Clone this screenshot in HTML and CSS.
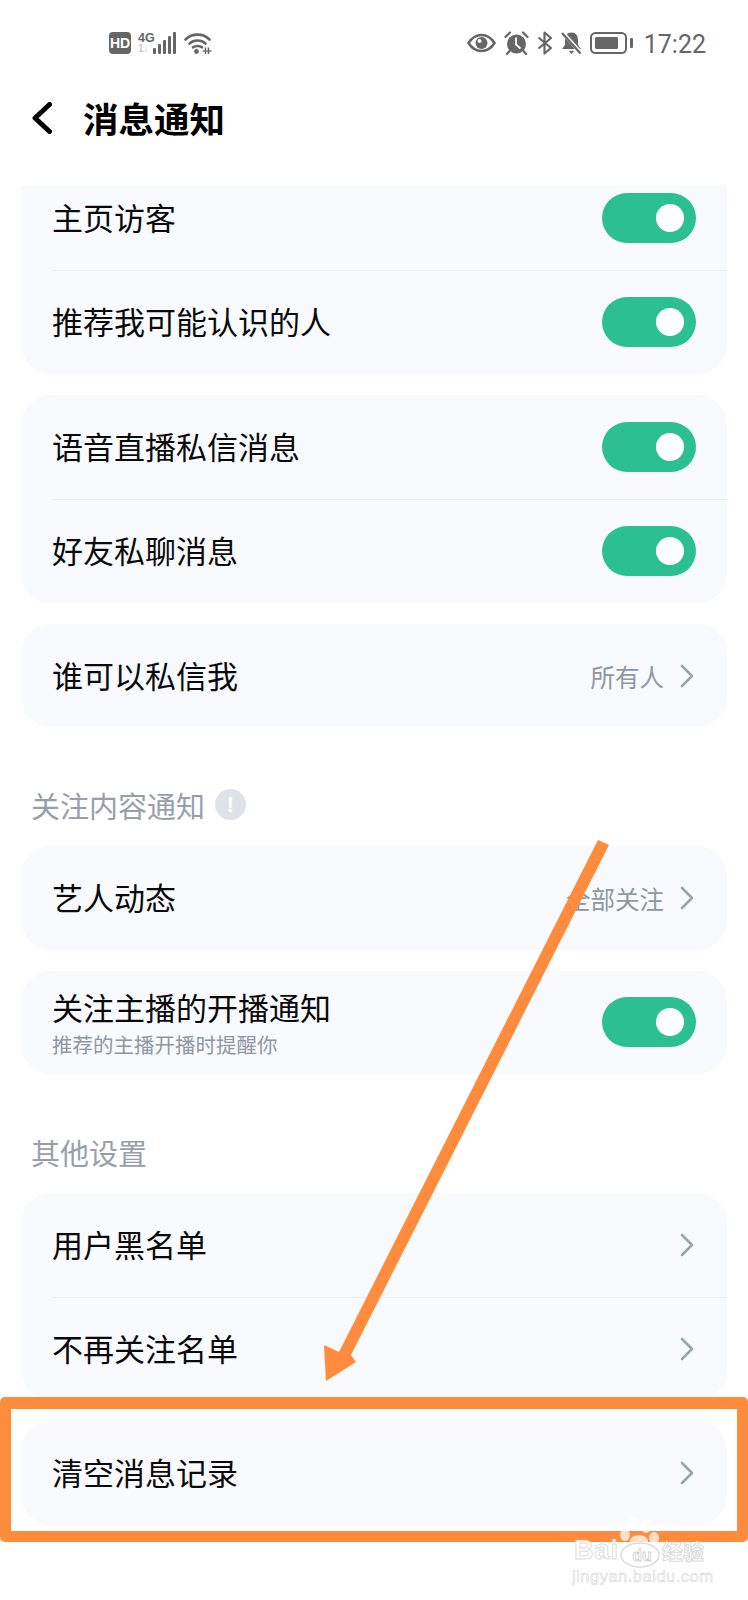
FILE: index.html
```html
<!DOCTYPE html>
<html lang="zh-CN">
<head>
<meta charset="utf-8">
<title>消息通知</title>
<link rel="stylesheet" href="styles.css">
</head>
<body>
<div class="page">
  <div class="status">
    <div class="status-left">
      <span class="hd">HD</span>
      <div class="net">
        <span class="net-4g">4G</span>
        <span class="net-arrows">1↓</span>
      </div>
      <svg class="ic-signal" width="23" height="22" viewBox="0 0 23 22"><g fill="#666"><rect x="0" y="16" width="3" height="6" rx="1"/><rect x="5" y="12" width="3" height="10" rx="1"/><rect x="10" y="8" width="3" height="14" rx="1"/><rect x="15" y="4" width="3" height="18" rx="1"/><rect x="20" y="0" width="3" height="22" rx="1"/></g></svg>
      <svg class="ic-wifi" width="28" height="22" viewBox="0 0 28 22"><g fill="none" stroke="#666" stroke-width="2.6" stroke-linecap="round"><path d="M1.5 7.5C8 1 19 1 25.5 7.5"/><path d="M5.5 11.5C9.5 7.500 17.500 7.500 21.500 11.500"/><path d="M9 15.300C11 13.500 16 13.500 18 15.300"/></g><circle cx="12.500" cy="19.500" r="2.400" fill="#666"/><path d="M21.500 15.500v6.500M24.500 15.500v6.500" stroke="#666" stroke-width="1.500"/><path d="M18.500 19h9" stroke="#666" stroke-width="1.300"/></svg>
    </div>
    <div class="status-right">
      <svg width="29" height="20" viewBox="0 0 29 20"><path d="M1.500 10C5 4.500 9.500 2 14.500 2S24 4.500 27.500 10C24 15.500 19.500 18 14.500 18S5 15.500 1.500 10Z" fill="none" stroke="#666" stroke-width="2.600"/><circle cx="14.500" cy="10" r="6" fill="#666"/><circle cx="12.500" cy="8" r="2" fill="#fff"/></svg>
      <svg width="25" height="24" viewBox="0 0 25 24"><circle cx="12.500" cy="13" r="9.500" fill="#666"/><path d="M12 6.500v7l4.500 4" fill="none" stroke="#fff" stroke-width="1.800"/><path d="M1.500 6L6 1.500M23.500 6L19 1.500M5.500 20l-2.500 3M19.500 20l2.500 3" stroke="#666" stroke-width="2.200" stroke-linecap="round"/></svg>
      <svg width="16" height="24" viewBox="0 0 16 24"><path d="M1.500 6.500L14 17l-6.500 5.500V1.500L14 7 1.500 17.500" fill="none" stroke="#666" stroke-width="2.200" stroke-linejoin="round"/></svg>
      <svg width="21" height="24" viewBox="0 0 21 24"><path d="M10.500 1.500c-4.500 0-6.500 3.500-6.500 7.500v5l-3 4h19l-3-4V9c0-4-2-7.500-6.500-7.500Z" fill="#666"/><path d="M8 20h5l-2.500 3Z" fill="#666"/><path d="M1.500 1.500l18 20" stroke="#fff" stroke-width="4"/><path d="M1 2l18.500 20.500" stroke="#666" stroke-width="2.200"/></svg>
      <svg width="43" height="22" viewBox="0 0 43 22"><rect x="1" y="1" width="35" height="20" rx="4.500" fill="none" stroke="#666" stroke-width="2"/><rect x="5" y="5" width="23" height="12" rx="1.500" fill="#666"/><rect x="40" y="6" width="3" height="10" rx="1" fill="#666"/></svg>
      <span class="time">17:22</span>
    </div>
  </div>

  <header class="nav">
    <svg class="nav-back" width="20" height="32" viewBox="0 0 20 32"><path d="M17.500 2.500L3 16l14.500 13.500" fill="none" stroke="#000" stroke-width="5" stroke-linecap="round" stroke-linejoin="round"/></svg>
    <h1 class="nav-title">消息通知</h1>
  </header>

  <main class="content">
    <section class="card card-clipped">
      <div class="row row-first"><span class="row-label">主页访客</span><span class="toggle"></span></div>
      <div class="row"><span class="row-label">推荐我可能认识的人</span><span class="toggle"></span></div>
    </section>

    <section class="card">
      <div class="row"><span class="row-label">语音直播私信消息</span><span class="toggle"></span></div>
      <div class="row"><span class="row-label">好友私聊消息</span><span class="toggle"></span></div>
    </section>

    <section class="card">
      <div class="row"><span class="row-label">谁可以私信我</span><span class="row-end"><span class="row-value">所有人</span><svg class="chev" width="14" height="24" viewBox="0 0 14 24"><path d="M2 2l10 10L2 22" fill="none" stroke="#9aa3ae" stroke-width="2.600" stroke-linecap="round" stroke-linejoin="round"/></svg></span></div>
    </section>

    <h2 class="section-title">关注内容通知<span class="info">!</span></h2>

    <section class="card">
      <div class="row"><span class="row-label">艺人动态</span><span class="row-end"><span class="row-value">全部关注</span><svg class="chev" width="14" height="24" viewBox="0 0 14 24"><path d="M2 2l10 10L2 22" fill="none" stroke="#9aa3ae" stroke-width="2.600" stroke-linecap="round" stroke-linejoin="round"/></svg></span></div>
    </section>

    <section class="card">
      <div class="row">
        <div class="row-stack"><span class="row-label">关注主播的开播通知</span><span class="row-sub">推荐的主播开播时提醒你</span></div>
        <span class="toggle"></span>
      </div>
    </section>

    <h2 class="section-title">其他设置</h2>

    <section class="card">
      <div class="row"><span class="row-label">用户黑名单</span><span class="row-end"><svg class="chev" width="14" height="24" viewBox="0 0 14 24"><path d="M2 2l10 10L2 22" fill="none" stroke="#9aa3ae" stroke-width="2.600" stroke-linecap="round" stroke-linejoin="round"/></svg></span></div>
      <div class="row"><span class="row-label">不再关注名单</span><span class="row-end"><svg class="chev" width="14" height="24" viewBox="0 0 14 24"><path d="M2 2l10 10L2 22" fill="none" stroke="#9aa3ae" stroke-width="2.600" stroke-linecap="round" stroke-linejoin="round"/></svg></span></div>
    </section>

    <section class="card">
      <div class="row"><span class="row-label">清空消息记录</span><span class="row-end"><svg class="chev" width="14" height="24" viewBox="0 0 14 24"><path d="M2 2l10 10L2 22" fill="none" stroke="#9aa3ae" stroke-width="2.600" stroke-linecap="round" stroke-linejoin="round"/></svg></span></div>
    </section>
  </main>

  <div class="highlight"></div>
  <svg class="arrow" width="748" height="1600" viewBox="0 0 748 1600"><polygon points="598,840 609,845 351,1355 356,1362 326,1381 324,1345 339,1352" fill="#ff8c3c"/></svg>

  <div class="mark">
    <svg class="mark-paw" width="46" height="56" viewBox="0 0 46 56"><g fill="#fff" fill-opacity=".72"><ellipse cx="7" cy="19" rx="5" ry="6"/><ellipse cx="16" cy="8" rx="5.500" ry="7"/><ellipse cx="28" cy="10" rx="5.500" ry="7"/><ellipse cx="36" cy="22" rx="5" ry="6"/><ellipse cx="21" cy="25" rx="9" ry="6"/></g><ellipse cx="22" cy="39" rx="19" ry="12" fill="#fff" fill-opacity=".85" stroke="#dcdcdc" stroke-width="1.500"/></svg>
    <div class="mark-line"><span class="mark-bai">Bai</span><span class="mark-du">du</span><span class="mark-jy">经验</span></div>
    <div class="mark-url">jingyan.baidu.com</div>
  </div>
</div>
</body>
</html>
```
FILE: styles.css
```css
* { box-sizing: border-box; }
html, body { margin: 0; padding: 0; background: #fff; }
body { font-family: "Noto Sans CJK SC", "Noto Sans", sans-serif; }

.page { position: relative; width: 748px; height: 1600px; overflow: hidden; background: #fff; }

/* Status bar */
.status { height: 86px; display: flex; justify-content: space-between; align-items: center; padding: 0 42px 0 109px; color: #666; }
.status-left { display: flex; align-items: center; }
.status-right { display: flex; align-items: center; gap: 8px; }
.hd { width: 22px; height: 22px; border-radius: 4px; background: #666; color: #fff; font: 700 14px/22px "Liberation Sans", sans-serif; text-align: center; }
.net { width: 16px; margin-left: 7px; display: flex; flex-direction: column; align-items: flex-start; font-family: "Liberation Sans", sans-serif; }
.net-4g { font-size: 12.500px; font-weight: 700; line-height: 12px; color: #666; }
.net-arrows { font-size: 10px; font-weight: 700; line-height: 10px; color: #ccc; }
.ic-signal { margin-left: -1px; }
.ic-wifi { margin-left: 8px; }
.time { margin: 3px 0 0 3px; font: 400 25px/30px Roboto, sans-serif; color: #666; }

/* Title bar */
.nav { height: 64px; display: flex; align-items: center; padding-left: 32px; }
.nav-back { flex: none; }
.nav-title { margin: 0 0 0 31px; font-size: 35.500px; line-height: 48px; font-weight: 700; color: #000; }

/* List */
.content { padding: 35px 21px 0; display: flex; flex-direction: column; gap: 21px; }
.card { background: #f9fafe; border-radius: 30px; overflow: hidden; }
.card-clipped { border-radius: 0 0 30px 30px; padding-bottom: 1px; }
.row { height: 103.700px; margin-left: 31px; padding-right: 31px; display: flex; align-items: center; justify-content: space-between; }
.row + .row { border-top: 1px solid #eceef2; }
.row-first { margin-top: -19px; }
.row-label { padding-bottom: 2px; font-size: 31px; line-height: 44px; color: #0a0a0a; }
.row-end { display: flex; align-items: center; gap: 16px; }
.row-value { padding-top: 3px; font-size: 24.500px; line-height: 34px; color: #8f97a2; }
.chev { flex: none; margin-right: 2px; }
.row-stack { padding-top: 4px; display: flex; flex-direction: column; }
.row-stack .row-label { height: 38px; padding-bottom: 0; line-height: 36px; }
.row-sub { margin-top: 2px; font-size: 20.500px; line-height: 30px; color: #8f97a2; }

.toggle { position: relative; width: 94px; height: 50px; border-radius: 25px; background: #2bbf92; flex: none; }
.toggle::after { content: ""; position: absolute; right: 12px; top: 11px; width: 28px; height: 28px; border-radius: 50%; background: #fff; }

.section-title { margin: 36.500px 0 0; padding-left: 10px; height: 40px; display: flex; align-items: center; gap: 10px; font-size: 29px; line-height: 40px; font-weight: 400; color: #989fa8; }
.info { width: 31px; height: 31px; border-radius: 50%; background: #dfe3e8; color: #fff; font: 700 22px/31px "Liberation Sans", sans-serif; text-align: center; }

/* Annotation overlay */
.highlight { position: absolute; left: 0; right: 0; top: 1397px; height: 145px; border: solid #ff8c3c; border-width: 12px 11px 11px; border-radius: 5px; }
.arrow { position: absolute; left: 0; top: 0; }

/* Watermark */
.mark { position: absolute; left: 572px; top: 1518px; width: 140px; height: 70px; font-family: "Liberation Sans", sans-serif; }
.mark-paw { position: absolute; left: 46px; top: -2px; }
.mark-line { position: absolute; left: 2px; top: 19px; display: flex; align-items: center; height: 26px; color: rgba(255,255,255,.85); -webkit-text-stroke: 1px rgba(190,190,190,.55); font-weight: 700; }
.mark-bai { font-size: 27px; letter-spacing: 1px; width: 48px; }
.mark-du { padding-top: 11px; font-size: 16px; width: 40px; text-align: center; -webkit-text-stroke: .8px rgba(170,170,170,.6); }
.mark-jy { font-family: "Noto Sans CJK SC", sans-serif; font-size: 21px; line-height: 26px; }
.mark-url { position: absolute; left: 0; top: 49px; font-size: 16.500px; line-height: 18px; color: rgba(255,255,255,.85); -webkit-text-stroke: .7px rgba(190,190,190,.55); letter-spacing: .5px; }
```
